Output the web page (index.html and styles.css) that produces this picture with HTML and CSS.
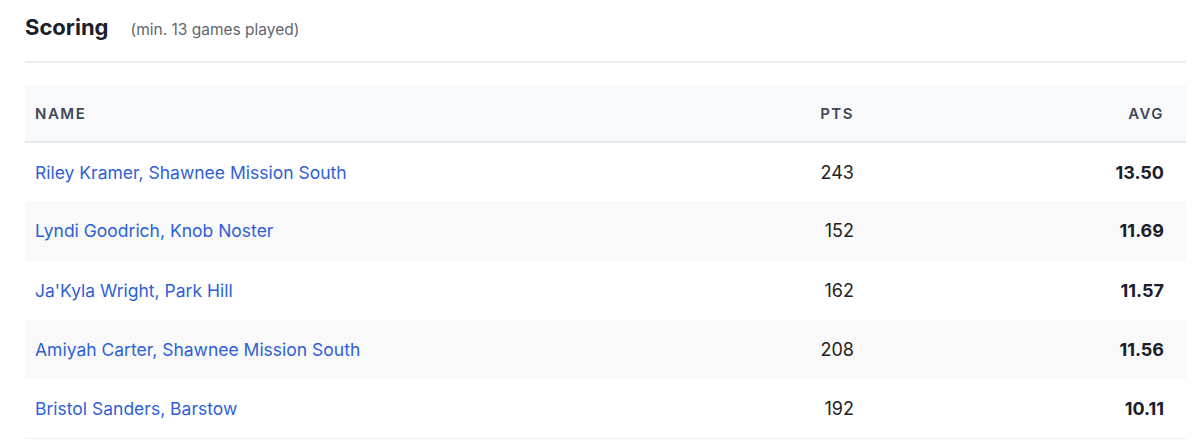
FILE: index.html
```html
<!DOCTYPE html>
<html lang="en">
<head>
    <meta charset="UTF-8">
    <title>Scoring Leaders</title>
    <link rel="stylesheet" href="styles.css">
</head>
<body>
    <div class="container">
        <div class="section-header">
            <h2>Scoring</h2>
            <span class="note">(min. 13 games played)</span>
        </div>

        <table class="leaders">
            <thead>
                <tr>
                    <th>Name</th>
                    <th class="num">Pts</th>
                    <th class="num avg">Avg</th>
                </tr>
            </thead>
            <tbody>
                <tr>
                    <td class="player"><a href="#">Riley Kramer</a>, <a href="#">Shawnee Mission South</a></td>
                    <td class="num">243</td>
                    <td class="num avg">13.50</td>
                </tr>
                <tr>
                    <td class="player"><a href="#">Lyndi Goodrich</a>, <a href="#">Knob Noster</a></td>
                    <td class="num">152</td>
                    <td class="num avg">11.69</td>
                </tr>
                <tr>
                    <td class="player"><a href="#">Ja'Kyla Wright</a>, <a href="#">Park Hill</a></td>
                    <td class="num">162</td>
                    <td class="num avg">11.57</td>
                </tr>
                <tr>
                    <td class="player"><a href="#">Amiyah Carter</a>, <a href="#">Shawnee Mission South</a></td>
                    <td class="num">208</td>
                    <td class="num avg">11.56</td>
                </tr>
                <tr>
                    <td class="player"><a href="#">Bristol Sanders</a>, <a href="#">Barstow</a></td>
                    <td class="num">192</td>
                    <td class="num avg">10.11</td>
                </tr>
            </tbody>
        </table>
    </div>
</body>
</html>
```

FILE: styles.css
```css
* {
    margin: 0;
    padding: 0;
    box-sizing: border-box;
}

body {
    font-family: Inter, 'Noto Sans', sans-serif;
    background: white;
    color: #1a202c;
}

.container {
    padding: 0 14px 0 25px;
}

.section-header {
    display: flex;
    align-items: baseline;
    gap: 22px;
    height: 63px;
    padding-top: 14px;
    border-bottom: 2px solid #edf0f3;
}

.section-header h2 {
    font-size: 22px;
    font-weight: 700;
    color: #1a202c;
}

.note {
    font-size: 15.5px;
    color: #5f6670;
}

.leaders {
    width: 100%;
    margin-top: 22px;
    border-collapse: collapse;
    font-size: 17.5px;
}

.leaders th {
    height: 57px;
    padding: 0 10px;
    text-align: left;
    font-size: 15px;
    font-weight: 600;
    letter-spacing: 0.1em;
    text-transform: uppercase;
    color: #3f4856;
    background: #f8f9fa;
    border-bottom: 2px solid #e2e8f0;
}

.leaders td {
    height: 59.3px;
    padding: 0 10px;
    color: #222;
}

.leaders tbody tr:nth-child(even) td {
    background: #f9f9f9;
}

.leaders tbody tr:last-child td {
    border-bottom: 1px solid #eef0f2;
}

.leaders .num {
    text-align: right;
    width: 120px;
}

.leaders td.num {
    font-size: 18px;
}

.leaders .avg {
    width: 322px;
    padding-right: 22px;
}

.leaders td.avg {
    font-weight: 700;
    color: #1a202c;
}

.leaders td.player {
    color: #2f5fd6;
}

.leaders a {
    color: #2f5fd6;
    text-decoration: none;
}
```
